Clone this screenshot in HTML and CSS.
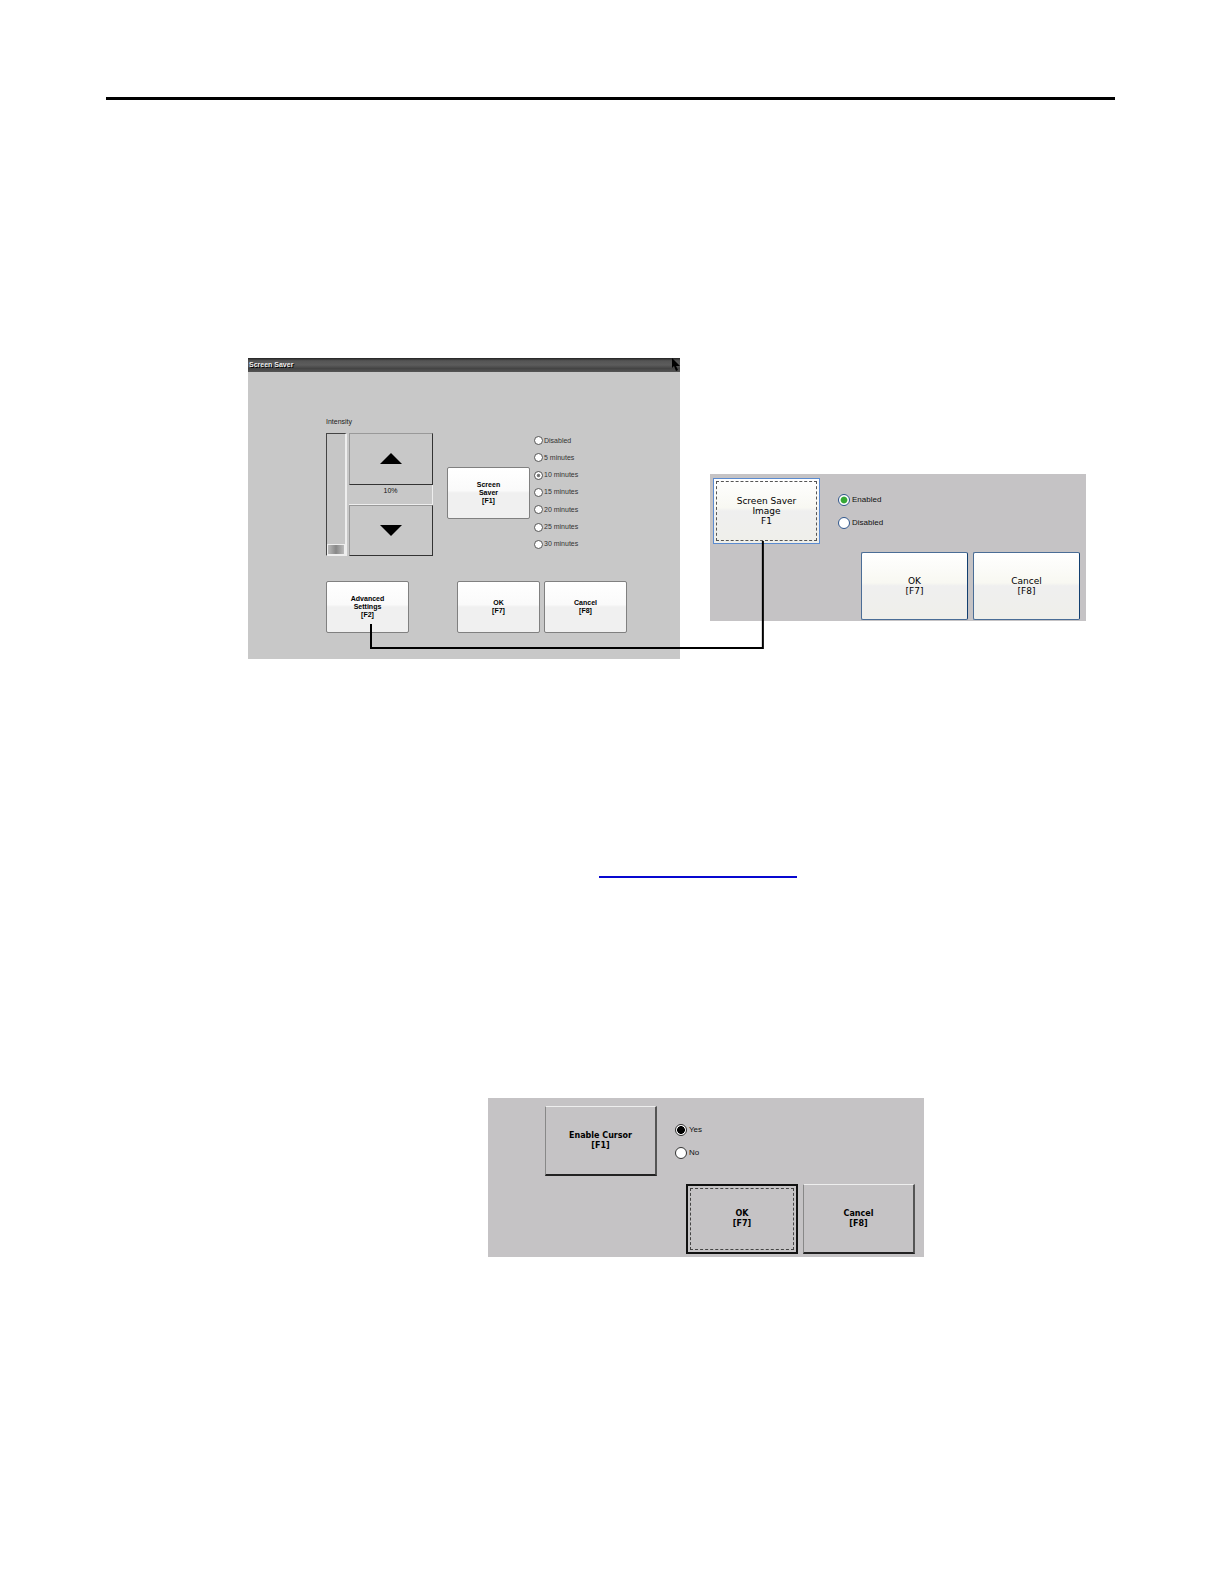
FILE: index.html
```html
<!DOCTYPE html>
<html lang="en">
<head>
    <meta charset="UTF-8">
    <title>Screen Saver</title>
    <meta name="viewport" content="width=device-width, initial-scale=1.0">
    <link rel="stylesheet" href="styles.css">
</head>
<body>
    <main class="page">
        <hr class="rule">

        <div class="figure">
            <section class="panel saver">
                <header class="title-bar">Screen Saver</header>
                <svg class="cursor" viewBox="0 0 8 13"><path d="M0 0 L0 10 L2 8 L4 13 L6 12 L4 8 L8 8 Z" fill="#000"/></svg>
                <div class="saver-body">
                    <label class="intensity-label" for="intensity">Intensity</label>
                    <div class="saver-controls">
                        <input type="range" id="intensity" class="slider" min="10" max="100" value="10">
                        <div class="stepper">
                            <button class="step" aria-label="Increase"><svg viewBox="0 0 22 11"><path d="M11 0 L22 11 H0 Z"/></svg></button>
                            <output class="step-value" for="intensity">10%</output>
                            <button class="step" aria-label="Decrease"><svg viewBox="0 0 22 11"><path d="M0 0 H22 L11 11 Z"/></svg></button>
                        </div>
                        <button class="btn saver-btn">Screen<br>Saver<br>[F1]</button>
                        <div class="times">
                            <label><input type="radio" name="time">Disabled</label>
                            <label><input type="radio" name="time">5 minutes</label>
                            <label><input type="radio" name="time" checked>10 minutes</label>
                            <label><input type="radio" name="time">15 minutes</label>
                            <label><input type="radio" name="time">20 minutes</label>
                            <label><input type="radio" name="time">25 minutes</label>
                            <label><input type="radio" name="time">30 minutes</label>
                        </div>
                    </div>
                    <div class="saver-actions">
                        <button class="btn advanced">Advanced<br>Settings<br>[F2]</button>
                        <button class="btn">OK<br>[F7]</button>
                        <button class="btn">Cancel<br>[F8]</button>
                    </div>
                </div>
            </section>

            <section class="panel dialog image-dialog">
                <div class="dialog-top">
                    <button class="btn focused">Screen Saver<br>Image<br>F1</button>
                    <div class="choices">
                        <label><input type="radio" name="image" checked>Enabled</label>
                        <label><input type="radio" name="image">Disabled</label>
                    </div>
                </div>
                <div class="dialog-actions">
                    <button class="btn">OK<br>[F7]</button>
                    <button class="btn">Cancel<br>[F8]</button>
                </div>
            </section>

            <svg class="connector" viewBox="0 0 394 108" preserveAspectRatio="none">
                <path d="M1 83 V107 H393 V0" fill="none" stroke="#000" stroke-width="2" vector-effect="non-scaling-stroke"/>
            </svg>
        </div>

        <a class="ref-link" href="#cursor" aria-label="Enable cursor"></a>

        <section class="panel dialog cursor-dialog" id="cursor">
            <div class="dialog-top">
                <button class="btn">Enable Cursor<br>[F1]</button>
                <div class="choices">
                    <label><input type="radio" name="cursor" checked>Yes</label>
                    <label><input type="radio" name="cursor">No</label>
                </div>
            </div>
            <div class="dialog-actions">
                <button class="btn default">OK<br>[F7]</button>
                <button class="btn">Cancel<br>[F8]</button>
            </div>
        </section>
    </main>
</body>
</html>
```
FILE: styles.css
```css
* {
    box-sizing: border-box;
}
body {
    margin: 0;
    background: #fff;
    color: #111;
    font-family: "Liberation Sans", Arial, sans-serif;
    font-size: 7px;
    line-height: 8px;
}
.page {
    padding: 97px 109px 327px 106px;
}
.rule {
    height: 3px;
    margin: 0;
    border: 0;
    background: #000;
}
button {
    font: inherit;
    color: #000;
    padding: 0;
    margin: 0;
}
label {
    display: flex;
    align-items: center;
}
input[type="radio"] {
    appearance: none;
    flex: none;
    width: 9px;
    height: 9px;
    margin: 0 1px 0 0;
    border: 1px solid #555;
    border-radius: 50%;
    background: #fff;
}

/* first figure: two panels joined by a line */
.figure {
    position: relative;
    display: grid;
    grid-template-columns: 432fr 376fr;
    align-items: start;
    gap: 30px;
    margin: 258px 29px 0 142px;
}
.panel {
    position: relative;
    overflow: hidden;
}
.connector {
    position: absolute;
    left: 122px;
    top: 183px;
    width: 47%;
    height: 108px;
}

.saver {
    background: #c8c8c8;
}
.title-bar {
    height: 14px;
    padding: 0 1px;
    background: linear-gradient(#222 0, #555 20%, #5c5c5c 50%, #444 75%, #555 100%);
    color: #eee;
    font-weight: bold;
    line-height: 14px;
    text-shadow: 1px 1px 0 #000;
}
.cursor {
    position: absolute;
    top: 0;
    right: 0;
    width: 8px;
    height: 13px;
}
.saver-body {
    padding: 46px 53px 26px 78px;
}
.intensity-label {
    height: 8px;
    color: #222;
}
.saver-controls {
    display: flex;
    align-items: flex-start;
    margin-top: 7px;
}
.slider {
    appearance: none;
    writing-mode: vertical-lr;
    direction: rtl;
    width: 21px;
    height: 123px;
    margin: 0 2px 0 0;
    background: #c6c6c6;
    border: 1px solid #444;
    border-right: 2px solid #eee;
    border-bottom-color: #eee;
}
.slider::-webkit-slider-thumb {
    appearance: none;
    width: 18px;
    height: 11px;
    background: linear-gradient(90deg, #bbb, #888 50%, #bbb);
    border: 1px solid #eee;
}
.stepper {
    display: flex;
    flex-direction: column;
    width: 84px;
    height: 123px;
}
.step {
    display: flex;
    align-items: center;
    justify-content: center;
    flex: 1;
    background: #c8c8c8;
    border: 1px solid #999;
    border-right: 1px solid #333;
    border-bottom: 1px solid #333;
    border-radius: 0;
}
.step svg {
    width: 22px;
    height: 11px;
}
.step-value {
    height: 20px;
    padding-top: 2px;
    border-right: 1px solid #eee;
    border-bottom: 1px solid #eee;
    text-align: center;
}
.btn {
    width: 83px;
    height: 52px;
    border: 1px solid #808080;
    border-radius: 2px;
    background: linear-gradient(#fff 0, #fafafa 45%, #f0f0f0 50%, #f0f0f0 100%);
    font-weight: bold;
}
.saver-btn {
    margin: 34px 4px 0 14px;
}
.times {
    display: flex;
    flex-direction: column;
    justify-content: space-between;
    height: 117px;
    margin-top: 1px;
    color: #333;
}
.times label {
    height: 13px;
}
.times input:checked {
    background: radial-gradient(circle, #666 0, #888 30%, #fff 45%);
}
.saver-actions {
    display: flex;
    gap: 4px;
    margin-top: 25px;
}
.advanced {
    margin-right: auto;
}

/* small dialogs with two choices */
.dialog {
    font-family: "DejaVu Sans", Verdana, sans-serif;
    background: #c5c3c5;
}
.dialog-top,
.dialog-actions {
    display: flex;
}
.dialog-actions {
    justify-content: flex-end;
    gap: 5px;
}
.choices {
    display: flex;
    flex-direction: column;
    gap: 11px;
    font-family: "Liberation Sans", Arial, sans-serif;
    font-size: 8px;
}
.choices label {
    height: 12px;
}
.choices input[type="radio"] {
    width: 12px;
    height: 12px;
    margin-right: 2px;
}

.image-dialog {
    margin-top: 116px;
    padding: 4px 6px 1px 3px;
    font-size: 9px;
    line-height: 10px;
}
.image-dialog .btn {
    width: 107px;
    height: 68px;
    border: 1px solid #4a6d96;
    border-right-color: #123f70;
    background: linear-gradient(#fff 0, #f8f8f2 45%, #efefef 50%, #efefea 100%);
    font-weight: normal;
}
.image-dialog .focused {
    height: 66px;
    border: 1px solid #5b8bd0;
    border-radius: 0;
    outline: 1px dashed #555;
    outline-offset: -4px;
}
.image-dialog .choices {
    margin: 16px 0 0 18px;
}
.image-dialog .choices input {
    border: 1px solid #2f568c;
}
.image-dialog .choices input:checked {
    background: radial-gradient(circle, #35a835 0, #35a835 40%, #fff 55%);
}
.image-dialog .dialog-actions {
    margin-top: 8px;
}

.ref-link {
    display: block;
    width: 198px;
    height: 2px;
    margin: 217px 0 0 493px;
    background: #0808d0;
}

.cursor-dialog {
    margin: 220px 191px 0 382px;
    padding: 8px 9px 3px 57px;
    font-size: 8px;
    line-height: 10px;
}
.cursor-dialog .btn {
    width: 112px;
    height: 70px;
    border: 1px solid #eee;
    border-left-color: #888;
    border-right: 2px solid #555;
    border-bottom: 2px solid #222;
    border-radius: 0;
    background: #c5c3c5;
}
.cursor-dialog .default {
    border: 2px solid #111;
    outline: 1px dashed #444;
    outline-offset: -5px;
}
.cursor-dialog .choices {
    margin: 18px 0 0 18px;
}
.cursor-dialog .choices input {
    border: 1px solid #333;
}
.cursor-dialog .choices input:checked {
    background: radial-gradient(circle, #000 0, #000 50%, #fff 60%);
}
.cursor-dialog .dialog-actions {
    margin-top: 8px;
}
```
